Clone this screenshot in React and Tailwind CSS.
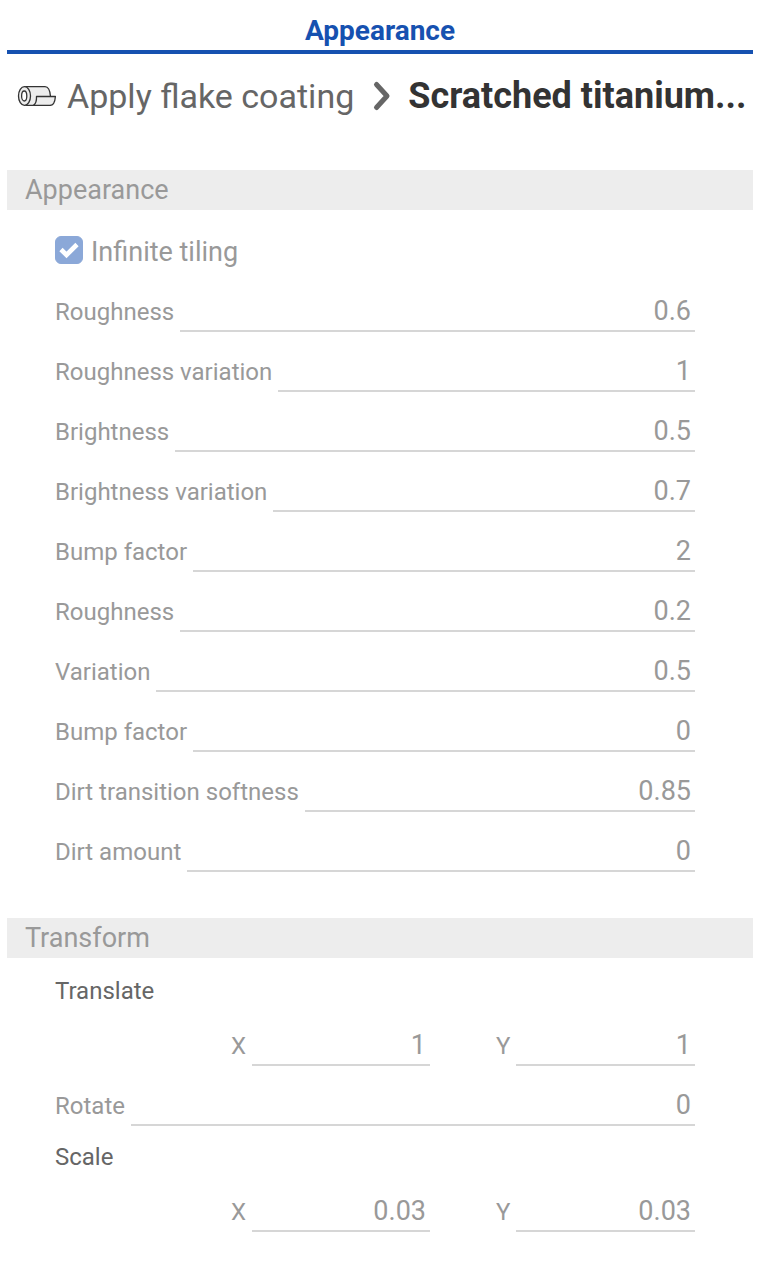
import { useId, useState } from 'react'

const appearanceFields = [
  { id: 'roughness', label: 'Roughness', value: '0.6' },
  { id: 'roughness-variation', label: 'Roughness variation', value: '1' },
  { id: 'brightness', label: 'Brightness', value: '0.5' },
  { id: 'brightness-variation', label: 'Brightness variation', value: '0.7' },
  { id: 'bump-factor', label: 'Bump factor', value: '2' },
  { id: 'dirt-roughness', label: 'Roughness', value: '0.2' },
  { id: 'dirt-variation', label: 'Variation', value: '0.5' },
  { id: 'dirt-bump-factor', label: 'Bump factor', value: '0' },
  { id: 'dirt-softness', label: 'Dirt transition softness', value: '0.85' },
  { id: 'dirt-amount', label: 'Dirt amount', value: '0' },
]

function RollIcon() {
  return (
    <svg className="w-10 h-6 shrink-0" viewBox="0 0 40 24" fill="#ededed" stroke="#333" strokeWidth="1.3" strokeLinejoin="round" aria-hidden="true">
      <path d="M7.5 2.6H28C31 2.6 33 5.5 33.5 12.5V21.4H7.5Z" />
      <ellipse cx="7.5" cy="12" rx="6" ry="9.4" />
      <ellipse cx="7.2" cy="12" rx="2.6" ry="5" fill="#fff" />
      <path d="M19.5 12.5H38.4C38 18 36 21.4 33 21.4H16.5C18.5 20 19.7 17 19.5 12.5Z" />
    </svg>
  )
}

function ChevronIcon() {
  return (
    <svg className="w-5 h-8 shrink-0" viewBox="0 0 20 32" fill="none" stroke="#666" strokeWidth="5" strokeLinecap="round" strokeLinejoin="round" aria-hidden="true">
      <path d="M4.5 4.5L15 16L4.5 27.5" />
    </svg>
  )
}

function Field({ label, value }) {
  const id = useId()

  return (
    <div className="flex flex-1 min-w-0 h-10 text-[#999]">
      <label htmlFor={id} className="shrink-0 pt-1 pr-[6px] text-2xl leading-8">
        {label}
      </label>
      <input
        id={id}
        type="text"
        inputMode="decimal"
        defaultValue={value}
        className="flex-1 w-full min-w-0 pr-1 text-right text-[27px] leading-8 border-b-2 border-[#d6d6d6] outline-none focus:border-[#1651b0]"
      />
    </div>
  )
}

function VectorField({ label, x, y }) {
  return (
    <fieldset className="min-w-0">
      <legend className="text-2xl leading-8 text-[#666]">{label}</legend>
      <div className="flex gap-[66px] pt-[19px] pl-44">
        <Field label="X" value={x} />
        <Field label="Y" value={y} />
      </div>
    </fieldset>
  )
}

function SectionHeader({ children }) {
  return (
    <h2 className="h-10 px-[18px] bg-[#ededed] text-[27px] leading-10 text-[#999]">
      {children}
    </h2>
  )
}

export default function App() {
  const [tiling, setTiling] = useState(true)

  return (
    <div className="pl-[7px] pr-[9px] pb-9 bg-white font-['Roboto','Liberation_Sans',sans-serif]">
      <div role="tablist" className="border-b-4 border-[#1651b0]">
        <button type="button" role="tab" aria-selected="true" className="block w-full pt-3 text-center text-[28px] leading-[38px] font-bold text-[#1651b0]">
          Appearance
        </button>
      </div>

      <nav aria-label="Breadcrumb" className="flex items-center h-[84px] px-[10px]">
        <RollIcon />
        <a href="#coating" className="ml-[10px] shrink-0 whitespace-nowrap text-[34px] leading-10 text-[#666]">
          Apply flake coating
        </a>
        <span className="ml-[18px] mr-4 shrink-0">
          <ChevronIcon />
        </span>
        <h1 className="whitespace-nowrap text-[36px] leading-10 font-bold text-[#333]">
          Scratched titanium...
        </h1>
      </nav>

      <section className="pt-8">
        <SectionHeader>Appearance</SectionHeader>
        <div className="pl-12 pr-[58px] pt-6">
          <label className="flex items-center h-8 gap-2 text-[27px] leading-8 text-[#999]">
            <span className="relative block size-7 shrink-0">
              <input
                type="checkbox"
                checked={tiling}
                onChange={(e) => setTiling(e.target.checked)}
                className="block size-7 appearance-none rounded-md border border-[#8ba8d8] checked:bg-[#8ba8d8]"
              />
              {tiling && (
                <svg className="absolute inset-0 size-7 pointer-events-none" viewBox="0 0 28 28" fill="none" stroke="#fff" strokeWidth="4.6" aria-hidden="true">
                  <path d="M6 13.5L11.5 19L22 8.5" />
                </svg>
              )}
            </span>
            <span className="pt-1">Infinite tiling</span>
          </label>
          <div className="flex flex-col gap-5 pt-[26px]">
            {appearanceFields.map((field) => (
              <div key={field.id} className="flex">
                <Field label={field.label} value={field.value} />
              </div>
            ))}
          </div>
        </div>
      </section>

      <section className="pt-[46px]">
        <SectionHeader>Transform</SectionHeader>
        <div className="pl-12 pr-[58px] pt-[17px]">
          <VectorField label="Translate" x="1" y="1" />
          <div className="flex pt-5 pb-[15px]">
            <Field label="Rotate" value="0" />
          </div>
          <VectorField label="Scale" x="0.03" y="0.03" />
        </div>
      </section>
    </div>
  )
}
